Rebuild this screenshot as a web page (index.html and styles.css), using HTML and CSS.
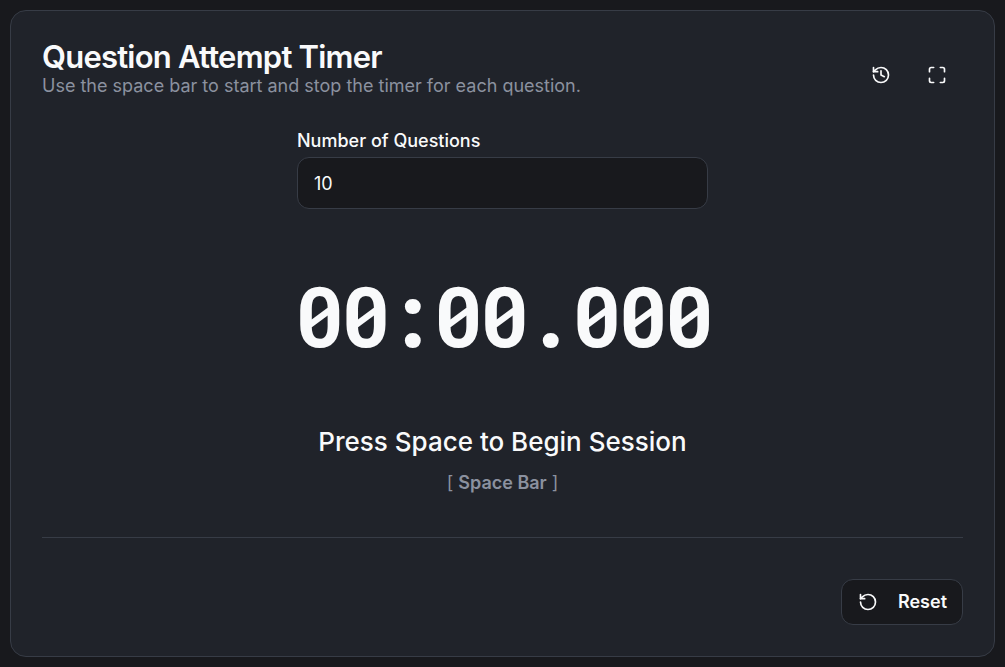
FILE: index.html
```html
<!DOCTYPE html>
<html lang="en">
<head>
<meta charset="utf-8">
<meta name="viewport" content="width=device-width, initial-scale=1">
<title>Question Attempt Timer</title>
<link rel="stylesheet" href="styles.css">
</head>
<body>
<main class="card">
  <header class="header">
    <div class="heading">
      <h1 class="title">Question Attempt Timer</h1>
      <p class="subtitle">Use the space bar to start and stop the timer for each question.</p>
    </div>
    <div class="actions">
      <button class="icon-button" type="button" aria-label="History">
        <svg class="icon" viewBox="0 0 24 24"><path d="M3 12a9 9 0 1 0 9-9 9.75 9.75 0 0 0-6.74 2.74L3 8"/><path d="M3 3v5h5"/><path d="M12 7v5l4 2"/></svg>
      </button>
      <button class="icon-button" type="button" aria-label="Full screen">
        <svg class="icon" viewBox="0 0 24 24"><path d="M8 3H5a2 2 0 0 0-2 2v3"/><path d="M21 8V5a2 2 0 0 0-2-2h-3"/><path d="M3 16v3a2 2 0 0 0 2 2h3"/><path d="M16 21h3a2 2 0 0 0 2-2v-3"/></svg>
      </button>
    </div>
  </header>
  <section class="session">
    <div class="field">
      <label class="label" for="count">Number of Questions</label>
      <input class="input" id="count" type="text" inputmode="numeric" value="10">
    </div>
    <div class="timer" role="timer">00:00.000</div>
    <div class="prompt">
      <p class="prompt-text">Press Space to Begin Session</p>
      <p class="hint">[ <kbd class="key">Space Bar</kbd> ]</p>
    </div>
  </section>
  <footer class="footer">
    <button class="reset" type="button">
      <svg class="icon" viewBox="0 0 24 24"><path d="M3 12a9 9 0 1 0 9-9 9.75 9.75 0 0 0-6.74 2.74L3 8"/><path d="M3 3v5h5"/></svg>
      Reset
    </button>
  </footer>
</main>
</body>
</html>
```
FILE: styles.css
```css
* {
  box-sizing: border-box;
}

body {
  margin: 0;
  padding: 10px;
  background: #18191d;
  color: #f9fafb;
  font-family: Inter, sans-serif;
  font-size: 18px;
  line-height: 26px;
}

h1,
p {
  margin: 0;
}

button,
input {
  color: inherit;
  font: inherit;
}

.card {
  padding: 31px;
  border: 1px solid #373c46;
  border-radius: 16px;
  background: #20232a;
}

.header {
  display: flex;
  align-items: center;
  justify-content: space-between;
}

.title {
  font-size: 31px;
  font-weight: 600;
  line-height: 30px;
  letter-spacing: -0.025em;
}

.subtitle {
  line-height: 28px;
  color: #8b919f;
}

.actions {
  display: flex;
  gap: 10px;
  padding-top: 8px;
}

.icon-button {
  display: grid;
  place-items: center;
  width: 46px;
  height: 46px;
  padding: 0;
  border: 0;
  border-radius: 12px;
  background: transparent;
}

.icon-button:last-child {
  margin-right: 3px;
}

.icon {
  width: 20px;
  height: 20px;
  fill: none;
  stroke: currentColor;
  stroke-width: 2;
  stroke-linecap: round;
  stroke-linejoin: round;
}

.session {
  display: flex;
  flex-direction: column;
  align-items: center;
  padding: 28px 0 41px;
}

.field {
  display: flex;
  flex-direction: column;
  gap: 3px;
  width: 100%;
  max-width: 411px;
}

.label {
  font-weight: 500;
}

.input {
  width: 100%;
  height: 52px;
  padding: 0 16px;
  border: 1px solid #373c46;
  border-radius: 12px;
  background: #18191d;
}

.timer {
  margin: 64px 0 67px;
  font-family: "Roboto Mono", "DejaVu Sans Mono", monospace;
  font-size: 84px;
  font-weight: 700;
  line-height: 84px;
  letter-spacing: -0.05em;
}

.prompt {
  text-align: center;
}

.prompt-text {
  margin-bottom: 10px;
  font-size: 26px;
  font-weight: 500;
  line-height: 36px;
}

.hint {
  color: #8b919f;
}

.key {
  font-family: inherit;
  font-weight: 600;
}

.footer {
  display: flex;
  justify-content: flex-end;
  padding-top: 41px;
  border-top: 1px solid #373c46;
}

.reset {
  display: flex;
  align-items: center;
  gap: 20px;
  height: 46px;
  padding: 0 15px 0 16px;
  border: 1px solid #373c46;
  border-radius: 12px;
  background: #18191d;
  font-weight: 600;
}
```
